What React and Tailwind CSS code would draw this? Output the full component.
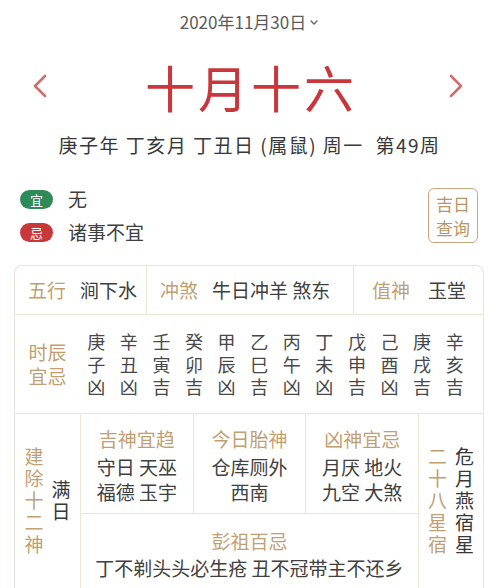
const hours = [
  ['庚', '子', '凶'],
  ['辛', '丑', '凶'],
  ['壬', '寅', '吉'],
  ['癸', '卯', '吉'],
  ['甲', '辰', '凶'],
  ['乙', '巳', '吉'],
  ['丙', '午', '凶'],
  ['丁', '未', '凶'],
  ['戊', '申', '吉'],
  ['己', '酉', '凶'],
  ['庚', '戌', '吉'],
  ['辛', '亥', '吉'],
];

const Chevron = ({ dir }) => (
  <svg width="16" height="24" viewBox="0 0 16 24" fill="none">
    <path
      d={dir === 'left' ? 'M13 2 L3 12 L13 22' : 'M3 2 L13 12 L3 22'}
      stroke="#cf6d6d"
      strokeWidth="2.6"
      strokeLinecap="round"
      strokeLinejoin="round"
    />
  </svg>
);

const Vertical = ({ text, className }) => (
  <div className={`flex flex-col items-center leading-[22px] ${className}`}>
    {text.split('').map((c, i) => (
      <div key={i} className="h-[22px]">{c}</div>
    ))}
  </div>
);

const App = () => {
  return (
    <div
      className="w-[499px] h-[588px] overflow-hidden bg-white text-[#404040]"
      style={{ fontFamily: '"Noto Sans CJK SC", "Noto Sans", sans-serif' }}
    >
      {/* date */}
      <div className="pt-[11px] flex items-center justify-center text-[17px] leading-[22px] text-[#5a5a5a]">
        <span>2020年11月30日</span>
        <svg width="10" height="8" viewBox="0 0 10 8" className="ml-[3px] mt-[2px]">
          <path d="M2 2 L5 5 L8 2" stroke="#666" strokeWidth="1.4" fill="none" strokeLinecap="round" />
        </svg>
      </div>

      {/* lunar day */}
      <div className="mt-[23px] h-[60px] flex items-center justify-between pl-[32px] pr-[35px]">
        <Chevron dir="left" />
        <div className="text-[50px] leading-[60px] tracking-[3px] text-[#c8373c] pl-[6px]">
          十月十六
        </div>
        <Chevron dir="right" />
      </div>

      {/* ganzhi */}
      <div className="mt-[17px] text-center text-[19px] leading-[24px] tracking-[1.5px] text-[#383838]">
        庚子年 丁亥月 丁丑日 (属鼠) 周一&nbsp;&nbsp;第49周
      </div>

      {/* yi ji */}
      <div className="mt-[31px] flex justify-between items-start pl-[20px] pr-[21px]">
        <div className="flex flex-col gap-[11px]">
          <div className="flex items-center h-[22px]">
            <span className="w-[33px] h-[19px] rounded-full bg-[#2e8a57] text-white text-[13px] leading-[19px] text-center">
              宜
            </span>
            <span className="ml-[15px] text-[19px] leading-[22px]">无</span>
          </div>
          <div className="flex items-center h-[22px]">
            <span className="w-[33px] h-[19px] rounded-full bg-[#c8383b] text-white text-[13px] leading-[19px] text-center">
              忌
            </span>
            <span className="ml-[15px] text-[19px] leading-[22px]">诸事不宜</span>
          </div>
        </div>
        <div className="w-[50px] h-[55px] rounded-[6px] border border-[#c9a77c] flex flex-col items-center justify-center text-[17px] leading-[24px] text-[#b99465]">
          <span>吉日</span>
          <span>查询</span>
        </div>
      </div>

      {/* table */}
      <div className="mt-[22px] ml-[14px] w-[470px] rounded-t-[8px] border border-b-0 border-[#ebe5d8] text-[19px]">
        <div className="flex h-[49px] border-b border-[#ebe5d8]">
          <div className="w-[132px] border-r border-[#ebe5d8] flex items-center pl-[13px] gap-[14px]">
            <span className="text-[#c19f72]">五行</span>
            <span>涧下水</span>
          </div>
          <div className="w-[207px] border-r border-[#ebe5d8] flex items-center pl-[13px] gap-[14px]">
            <span className="text-[#c19f72]">冲煞</span>
            <span>牛日冲羊 煞东</span>
          </div>
          <div className="flex-1 flex items-center pl-[18px] gap-[18px]">
            <span className="text-[#c19f72]">值神</span>
            <span>玉堂</span>
          </div>
        </div>

        <div className="flex h-[99px] border-b border-[#ebe5d8]">
          <div className="w-[65px] flex flex-col items-center justify-center leading-[24px] text-[#c19f72]">
            <span>时辰</span>
            <span>宜忌</span>
          </div>
          <div className="w-[391px] grid grid-cols-12 items-center">
            {hours.map((h, i) => (
              <div key={i} className="flex flex-col items-center text-[18px] leading-[22.5px] text-[#484848]">
                {h.map((c, j) => (
                  <span key={j}>{c}</span>
                ))}
              </div>
            ))}
          </div>
        </div>

        <div className="flex h-[180px]">
          <div className="w-[66px] border-r border-[#ebe5d8] flex items-center justify-center gap-[8px] pb-[8px]">
            <Vertical text="建除十二神" className="text-[#c19f72]" />
            <Vertical text="满日" className="text-[#383838]" />
          </div>
          <div className="w-[338px] border-r border-[#ebe5d8] flex flex-col">
            <div className="h-[100px] flex border-b border-[#ebe5d8]">
              {[
                ['吉神宜趋', '守日 天巫', '福德 玉宇'],
                ['今日胎神', '仓库厕外', '西南'],
                ['凶神宜忌', '月厌 地火', '九空 大煞'],
              ].map((c, i) => (
                <div
                  key={i}
                  className={`flex-1 flex flex-col items-center pt-[12px] ${i < 2 ? 'border-r border-[#ebe5d8]' : ''}`}
                >
                  <span className="text-[#c19f72] leading-[26px]">{c[0]}</span>
                  <span className="leading-[25px] mt-[2px]">{c[1]}</span>
                  <span className="leading-[25px]">{c[2]}</span>
                </div>
              ))}
            </div>
            <div className="flex flex-col items-center pt-[14px]">
              <span className="text-[#c19f72] leading-[26px]">彭祖百忌</span>
              <span className="leading-[26px] mt-[1px]">丁不剃头头必生疮 丑不冠带主不还乡</span>
            </div>
          </div>
          <div className="flex-1 flex items-center justify-center gap-[8px] pb-[8px]">
            <Vertical text="二十八星宿" className="text-[#c19f72]" />
            <Vertical text="危月燕宿星" className="text-[#383838]" />
          </div>
        </div>
      </div>
    </div>
  );
};

export default App;
